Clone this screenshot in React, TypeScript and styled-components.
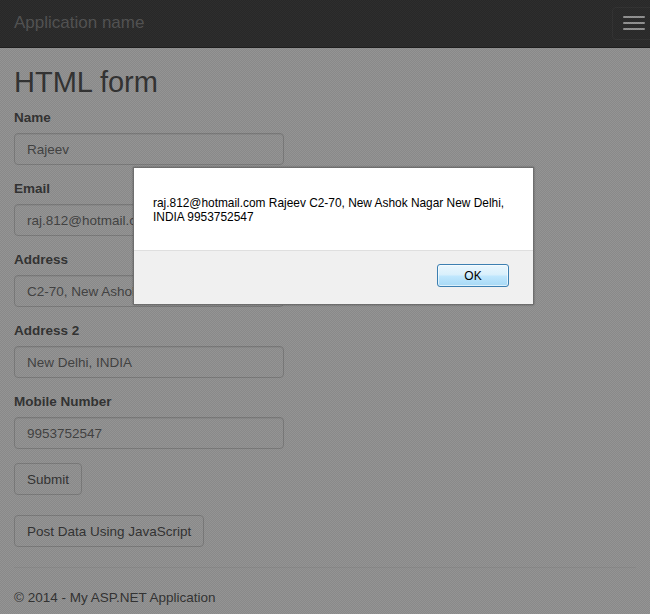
import React from 'react';
import styled, {createGlobalStyle} from 'styled-components';

const GlobalStyle = createGlobalStyle`
  html, body {
    margin: 0;
    padding: 0;
    background: #fff;
    font-family: "Liberation Sans", Arial, sans-serif;
    font-size: 13.5px;
    line-height: 20px;
    color: #333;
    overflow: hidden;
  }
  * {
    box-sizing: border-box;
  }
`;

const fields = [
  {label: 'Name', value: 'Rajeev'},
  {label: 'Email', value: 'raj.812@hotmail.com'},
  {label: 'Address', value: 'C2-70, New Ashok Nagar'},
  {label: 'Address 2', value: 'New Delhi, INDIA'},
  {label: 'Mobile Number', value: '9953752547'},
];

const App = () => {
  return (
    <>
      <GlobalStyle />
      <Page>
        <Navbar>
          <Brand>Application name</Brand>
          <Toggle type="button" aria-label="menu">
            <Bar />
            <Bar />
            <Bar />
          </Toggle>
        </Navbar>

        <Container>
          <Title>HTML form</Title>
          <form>
            {fields.map((f) => (
              <FormGroup key={f.label}>
                <Label>{f.label}</Label>
                <Input type="text" defaultValue={f.value} />
              </FormGroup>
            ))}
            <Button type="button">Submit</Button>
            <Button type="button" $spaced>
              Post Data Using JavaScript
            </Button>
          </form>
          <Rule />
          <Footer>© 2014 - My ASP.NET Application</Footer>
        </Container>
      </Page>

      {/* IE alert: dims the page and sits on top */}
      <Dimmer />
      <Dialog role="alertdialog">
        <DialogBody>
          <DialogText>
            raj.812@hotmail.com Rajeev C2-70, New Ashok Nagar New Delhi, INDIA
            9953752547
          </DialogText>
        </DialogBody>
        <DialogFooter>
          <OkButton type="button">OK</OkButton>
        </DialogFooter>
      </Dialog>
    </>
  );
};

export default App;

const Page = styled.div`
  min-height: 614px;
`;

const Navbar = styled.div`
  height: 48px;
  background: #222;
  border-bottom: 1px solid #080808;
  display: flex;
  align-items: flex-start;
  justify-content: space-between;
  padding-left: 14px;
  overflow: hidden;
`;

const Brand = styled.a`
  color: #777;
  font-size: 17px;
  line-height: 20px;
  padding-top: 13px;
  text-decoration: none;
`;

const Toggle = styled.button`
  margin-top: 7px;
  margin-right: -7px;
  width: 45px;
  height: 33px;
  padding: 8px 10px;
  background: transparent;
  border: 1px solid #333;
  border-radius: 4px;
  display: flex;
  flex-direction: column;
  gap: 4px;
`;

const Bar = styled.span`
  display: block;
  width: 22px;
  height: 2px;
  border-radius: 1px;
  background: #fff;
`;

const Container = styled.div`
  padding: 0 14px;
`;

const Title = styled.h2`
  margin: 18px 0 9px;
  font-size: 29px;
  font-weight: 500;
  line-height: 33px;
  color: #333;
`;

const FormGroup = styled.div`
  margin-bottom: 14px;
`;

const Label = styled.label`
  display: inline-block;
  margin-bottom: 5px;
  font-weight: bold;
`;

const Input = styled.input`
  display: block;
  width: 270px;
  height: 32px;
  padding: 6px 12px;
  font-family: "Liberation Sans", Arial, sans-serif;
  font-size: 13.5px;
  color: #555;
  background: #fff;
  border: 1px solid #ccc;
  border-radius: 4px;
  box-shadow: inset 0 1px 1px rgba(0, 0, 0, 0.075);
`;

const Button = styled.button<{$spaced?: boolean}>`
  display: block;
  margin-top: ${(p) => (p.$spaced ? '20px' : '1px')};
  height: 32px;
  padding: 0 12px;
  font-family: "Liberation Sans", Arial, sans-serif;
  font-size: 13.5px;
  color: #333;
  background: #fff;
  border: 1px solid #ccc;
  border-radius: 4px;
`;

const Rule = styled.hr`
  margin: 20px 0 20px;
  border: 0;
  border-top: 1px solid #eee;
`;

const Footer = styled.p`
  margin: 0;
  color: #333;
`;

const Dimmer = styled.div`
  position: fixed;
  inset: 0;
  background: repeating-conic-gradient(
      rgba(44, 44, 44, 0.56) 0 25%,
      rgba(58, 58, 58, 0.54) 0 50%
    )
    0 0 / 2px 2px;
`;

const Dialog = styled.div`
  position: fixed;
  left: 133px;
  top: 167px;
  width: 401px;
  height: 138px;
  display: flex;
  flex-direction: column;
  border: 1px solid #6e6e6e;
  box-shadow: 0 0 2px rgba(0, 0, 0, 0.35);
  font-family: "Liberation Sans", Arial, sans-serif;
  font-size: 11.9px;
  color: #000;
`;

const DialogBody = styled.div`
  height: 83px;
  background: #fff;
  padding: 28px 0 0 19px;
  border-bottom: 1px solid #dfdfdf;
`;

const DialogText = styled.p`
  margin: 0;
  max-width: 360px;
  line-height: 14px;
`;

const DialogFooter = styled.div`
  flex: 1;
  background: #f0f0f0;
  display: flex;
  justify-content: flex-end;
  align-items: flex-start;
  padding: 13px 24px 0 0;
`;

const OkButton = styled.button`
  width: 72px;
  height: 23px;
  padding: 0;
  font-family: "Liberation Sans", Arial, sans-serif;
  font-size: 12px;
  color: #000;
  border: 1px solid #3c7fb1;
  border-radius: 3px;
  background: linear-gradient(#eaf6fd 0%, #d9f0fc 45%, #bee6fd 55%, #a7d9f5 100%);
  box-shadow: inset 0 0 0 1px rgba(255, 255, 255, 0.6);
`;
